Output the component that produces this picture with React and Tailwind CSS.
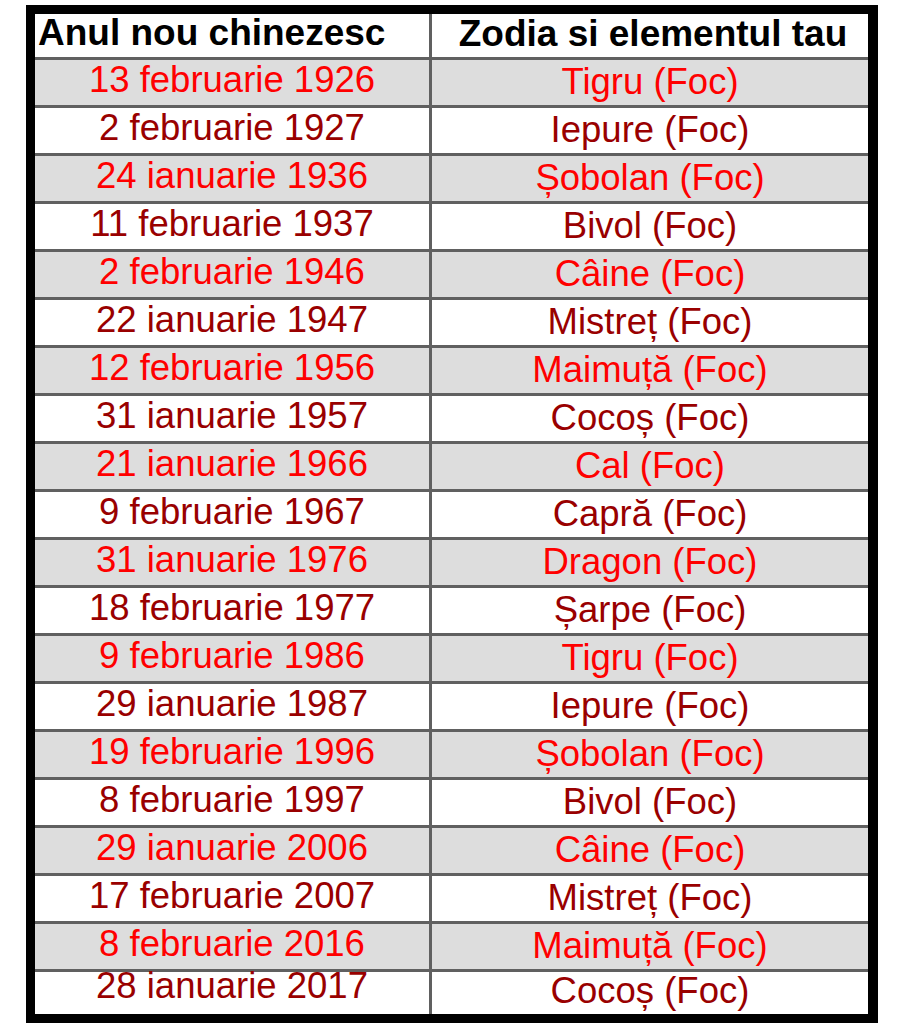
const ROWS = [
  ['13 februarie 1926', 'Tigru (Foc)'],
  ['2 februarie 1927', 'Iepure (Foc)'],
  ['24 ianuarie 1936', 'Șobolan (Foc)'],
  ['11 februarie 1937', 'Bivol (Foc)'],
  ['2 februarie 1946', 'Câine (Foc)'],
  ['22 ianuarie 1947', 'Mistreț (Foc)'],
  ['12 februarie 1956', 'Maimuță (Foc)'],
  ['31 ianuarie 1957', 'Cocoș (Foc)'],
  ['21 ianuarie 1966', 'Cal (Foc)'],
  ['9 februarie 1967', 'Capră (Foc)'],
  ['31 ianuarie 1976', 'Dragon (Foc)'],
  ['18 februarie 1977', 'Șarpe (Foc)'],
  ['9 februarie 1986', 'Tigru (Foc)'],
  ['29 ianuarie 1987', 'Iepure (Foc)'],
  ['19 februarie 1996', 'Șobolan (Foc)'],
  ['8 februarie 1997', 'Bivol (Foc)'],
  ['29 ianuarie 2006', 'Câine (Foc)'],
  ['17 februarie 2007', 'Mistreț (Foc)'],
  ['8 februarie 2016', 'Maimuță (Foc)'],
  ['28 ianuarie 2017', 'Cocoș (Foc)'],
];

export default function App() {
  return (
    <div className="min-h-[1024px] bg-white pt-[5px] font-['Liberation_Sans',Arial,sans-serif]">
      <div className="ml-[26px] w-[852px] border-y-[9px] border-l-[9px] border-r-[10px] border-black">
        {/* header */}
        <div className="flex h-[46px] border-b-[3px] border-[#606060] bg-white text-[37px] font-bold text-black">
          <div className="w-[397px] shrink-0 border-r-[3px] border-[#606060] pl-[3px] leading-[38px] whitespace-nowrap">
            Anul nou chinezesc
          </div>
          <div className="flex-1 pl-[6px] text-center leading-[39px] whitespace-nowrap">
            Zodia si elementul tau
          </div>
        </div>

        {ROWS.map(([date, sign], i) => (
          <Row key={i} date={date} sign={sign} shaded={i % 2 === 0} last={i === ROWS.length - 1} />
        ))}
      </div>
    </div>
  );
}

function Row({ date, sign, shaded, last }) {
  const tone = shaded ? 'bg-[#dddddd] text-[#ff0000]' : 'bg-white text-[#990000]';
  return (
    <div
      className={`flex text-[36.5px] whitespace-nowrap ${tone} ${
        last ? 'h-[42px]' : 'h-[48px] border-b-[3px] border-[#606060]'
      }`}
    >
      <div
        className={`w-[397px] shrink-0 border-r-[3px] border-[#606060] text-center ${
          last ? 'leading-[28px]' : 'leading-[40px]'
        }`}
      >
        {date}
      </div>
      <div className={`flex-1 text-center ${last ? 'leading-[38px]' : 'leading-[44px]'}`}>{sign}</div>
    </div>
  );
}
